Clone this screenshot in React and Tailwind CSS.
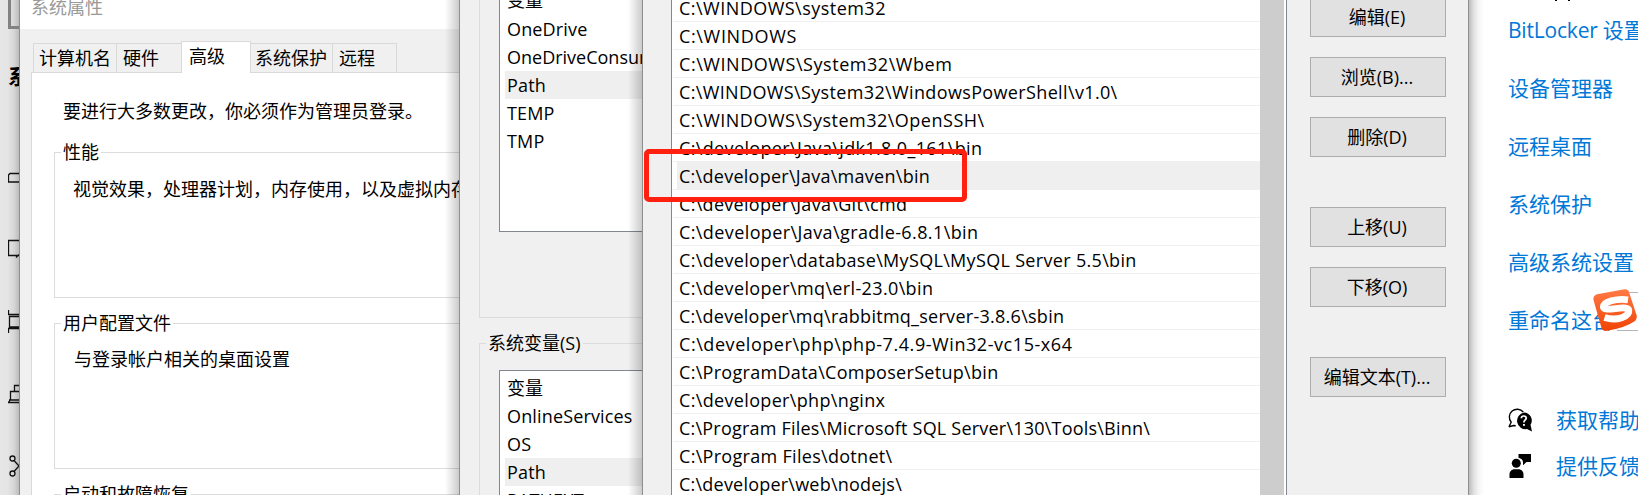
import React from "react";

const paths = [
  ["C:\\WINDOWS\\system32", "tracking-[0.47px]"],
  ["C:\\WINDOWS", "tracking-[0.65px]"],
  ["C:\\WINDOWS\\System32\\Wbem", "tracking-[0.55px]"],
  ["C:\\WINDOWS\\System32\\WindowsPowerShell\\v1.0\\", "tracking-[0.36px]"],
  ["C:\\WINDOWS\\System32\\OpenSSH\\", "tracking-[0.5px]"],
  ["C:\\developer\\Java\\jdk1.8.0_161\\bin", "tracking-[0.36px]"],
  ["C:\\developer\\Java\\maven\\bin", "tracking-[0.27px]"],
  ["C:\\developer\\Java\\Git\\cmd", "tracking-[0.3px]"],
  ["C:\\developer\\Java\\gradle-6.8.1\\bin", "tracking-[0.4px]"],
  ["C:\\developer\\database\\MySQL\\MySQL Server 5.5\\bin", "tracking-[0.32px]"],
  ["C:\\developer\\mq\\erl-23.0\\bin", "tracking-[0.36px]"],
  ["C:\\developer\\mq\\rabbitmq_server-3.8.6\\sbin", "tracking-[0.27px]"],
  ["C:\\developer\\php\\php-7.4.9-Win32-vc15-x64", "tracking-[0.56px]"],
  ["C:\\ProgramData\\ComposerSetup\\bin", "tracking-[0.3px]"],
  ["C:\\developer\\php\\nginx", "tracking-[0.34px]"],
  ["C:\\Program Files\\Microsoft SQL Server\\130\\Tools\\Binn\\", "tracking-[0.21px]"],
  ["C:\\Program Files\\dotnet\\", "tracking-[0.3px]"],
  ["C:\\developer\\web\\nodejs\\", "tracking-[0.22px]"],
];
const SELECTED = 6;

function Sidebar() {
  return (
    <div className="w-[20px] shrink-0 overflow-hidden border-r border-[#8f8f8f] bg-[linear-gradient(to_right,#e6e6e6_0,#e4e4e4_8px,#d6d6d6_14px,#bcbcbc_19px)]">
      <div className="ml-2 h-[29px] w-10 border-b-3 border-l-3 border-[#828282]" />
      <div className="ml-2 mt-[31px] h-8 w-12 whitespace-nowrap text-[21px] font-bold leading-8">系统</div>
      <svg className="ml-2 block h-[403px] w-[11px]" viewBox="8 92 11 403" fill="none" stroke="#111" strokeWidth="1.3">
        <path d="M19 173.500H10L8.500 175V182H19" />
        <path d="M19 240.500H8.500V255.500H19M16 257.500l3-3" />
        <path d="M8.500 310v4.500H19M19 316.500H9.500V327H19M19 328.500H8.500V333" />
        <path d="M19 385.500h-4.500v6M19 391.500h-8.500v8L8.500 402.500H19M9 400H19" />
        <circle cx="12.500" cy="458.500" r="2.500" />
        <circle cx="12.500" cy="473.500" r="2.500" />
        <path d="M14 460.500l5 5.500l-5 5.500" />
      </svg>
    </div>
  );
}

function Group({ title, height, children }) {
  return (
    <fieldset className={"relative ml-[22px] mr-[-20px] shrink-0 border border-[#dcdcdc] " + height}>
      <div className="absolute -top-[15px] left-[6px] h-7 bg-white px-0.5 leading-7">{title}</div>
      {children}
    </fieldset>
  );
}

function SystemProperties() {
  return (
    <div className="relative flex w-[440px] shrink-0 flex-col overflow-hidden border-r border-[#8f8f8f] bg-[#f0f0f0]">
      <div className="h-[29px] shrink-0 bg-white pl-[11px] text-[#999]">
        <div className="-mt-[7px] leading-7">系统属性</div>
      </div>
      <div className="z-10 -mb-px flex h-[44px] shrink-0 items-end pl-[13px] leading-[29px]">
        <div className="h-[30px] w-[84px] border border-[#d9d9d9] pl-[5px]">计算机名</div>
        <div className="-ml-px h-[30px] w-[66px] border border-[#d9d9d9] pl-[6px]">硬件</div>
        <div className="-ml-px h-8 w-[70px] border border-b-0 border-[#d9d9d9] bg-white pl-[7px]">高级</div>
        <div className="-ml-px h-[30px] w-[83px] border border-[#d9d9d9] pl-[4px]">系统保护</div>
        <div className="-ml-px h-[30px] w-[65px] border border-[#d9d9d9] pl-[6px]">远程</div>
      </div>
      <div className="-mr-5 ml-[11px] flex flex-1 flex-col border-l border-t border-[#d9d9d9] bg-white">
        <div className="mb-[27px] ml-[31px] mt-6 h-7 whitespace-nowrap leading-7">要进行大多数更改，你必须作为管理员登录。</div>
        <Group title="性能" height="h-[146px]">
          <div className="ml-[18px] mt-[22px] whitespace-nowrap leading-7">视觉效果，处理器计划，内存使用，以及虚拟内存</div>
        </Group>
        <div className="h-[25px] shrink-0" />
        <Group title="用户配置文件" height="h-[146px]">
          <div className="ml-[19px] mt-[21px] whitespace-nowrap leading-7">与登录帐户相关的桌面设置</div>
        </Group>
        <div className="h-[25px] shrink-0" />
        <Group title="启动和故障恢复" height="h-10" />
      </div>
      <div className="absolute inset-y-0 right-0 z-20 w-3.5 bg-gradient-to-r from-transparent to-black/20" />
    </div>
  );
}

function VarRow({ children, selected, tracking = "tracking-[0.15px]" }) {
  return (
    <div className={"ml-[5px] h-7 whitespace-nowrap pl-0.5 leading-7 " + tracking + (selected ? " bg-[#efefef]" : "")}>{children}</div>
  );
}

function EnvironmentVariables() {
  return (
    <div className="relative flex w-[183px] shrink-0 flex-col overflow-hidden border-r border-[#8f8f8f] bg-[#f0f0f0] pl-[19px]">
      <div className="h-[318px] shrink-0 border-b border-l border-[#dcdcdc] pl-[19px]">
        <div className="h-[232px] overflow-hidden border-b border-l border-[#828790] bg-white">
          <div className="-mt-[14px] ml-[7px] h-[29px] leading-7">变量</div>
          <VarRow>OneDrive</VarRow>
          <VarRow tracking="tracking-[0px]">OneDriveConsumer</VarRow>
          <VarRow selected>Path</VarRow>
          <VarRow>TEMP</VarRow>
          <VarRow>TMP</VarRow>
        </div>
      </div>
      <div className="relative mt-[25px] flex-1 border-l border-t border-[#dcdcdc] pl-[19px] pt-[26px]">
        <div className="absolute -top-[15px] left-[6px] h-7 bg-[#f0f0f0] px-0.5 leading-7">系统变量(S)</div>
        <div className="h-40 border-l border-t border-[#828790] bg-white">
          <div className="ml-[7px] mt-[3px] h-7 leading-7">变量</div>
          <VarRow>OnlineServices</VarRow>
          <VarRow>OS</VarRow>
          <VarRow selected>Path</VarRow>
          <VarRow>PATHEXT</VarRow>
        </div>
      </div>
      <div className="absolute inset-y-0 right-0 w-3.5 bg-gradient-to-r from-transparent to-black/20" />
    </div>
  );
}

function DialogButton({ children, gap }) {
  return (
    <button className={"block h-10 w-[136px] shrink-0 border border-[#adadad] bg-[#e1e1e1] pr-0.5 text-center leading-[38px] " + gap}>{children}</button>
  );
}

function EditPathDialog() {
  return (
    <div className="relative flex w-[826px] shrink-0 border-r border-[#8f8f8f] bg-[#f0f0f0] pl-7">
      <div className="flex w-[616px] shrink-0 overflow-hidden border-x border-[#828790] bg-white">
        <div className="-mt-1.5 w-[588px] shrink-0 pl-px">
          {paths.map(([text, tracking], i) => (
            <div key={text} className="flex h-7 border-b border-[#efefef] pl-1">
              <div className={"flex-1 whitespace-pre pl-0.5 leading-7 " + tracking + (i === SELECTED ? " -mt-px h-[29px] bg-[#efefef] pt-px" : " h-7")}>{text}</div>
            </div>
          ))}
        </div>
        <div className="w-6 bg-[#cdcdcd]" />
      </div>
      <div className="ml-[23px] flex flex-col">
        <DialogButton gap="-mt-[3px]">编辑(E)</DialogButton>
        <DialogButton gap="mt-5">浏览(B)...</DialogButton>
        <DialogButton gap="mt-5">删除(D)</DialogButton>
        <DialogButton gap="mt-[50px]">上移(U)</DialogButton>
        <DialogButton gap="mt-5">下移(O)</DialogButton>
        <DialogButton gap="mt-[50px]">编辑文本(T)...</DialogButton>
      </div>
      <div className="absolute left-px top-[149px] h-[53px] w-[323px] rounded-[5px] border-5 border-[#ff2010]" />
    </div>
  );
}

function Settings() {
  return (
    <div className="relative w-[169px] shrink-0 overflow-hidden bg-[linear-gradient(to_right,#bdbdbd_0,#e2e2e2_5px,#f6f6f6_10px,#fff_15px)] pl-[39px] text-[21px] text-[#0078d7]">
      <div className="absolute left-[86px] top-0 flex gap-[11px]">
        <div className="h-px w-0.5 bg-black" />
        <div className="h-px w-0.5 bg-black" />
      </div>
      <div className="mt-px flex flex-col whitespace-nowrap leading-[58px]">
        <div className="h-[58px] tracking-[-0.2px]">BitLocker 设置</div>
        <div className="h-[58px]">设备管理器</div>
        <div className="h-[58px]">远程桌面</div>
        <div className="h-[58px]">系统保护</div>
        <div className="h-[58px]">高级系统设置</div>
        <div className="h-[58px]">重命名这台电脑</div>
      </div>
      <div className="mt-[48px] flex h-[46px] items-center whitespace-nowrap">
        <svg className="mr-6 h-6 w-6 shrink-0" viewBox="0 0 24 24">
          <path d="M.9 18.800l2.300-4.600A7.600 7.600 0 1 1 15.300 4M.9 18.800l4.800-1.300l2 .300" fill="none" stroke="#000" strokeWidth="1.400" />
          <path d="M16 4.500a8 8 0 0 1 6.500 12.300L24 23.600l-5-2.500A8.200 8.200 0 1 1 16 4.500z" fill="#000" />
          <path d="M13.300 10.300c.2-3.200 5.200-2.900 4.900.1c-.1 1.500-2.300 1.800-2.300 4" fill="none" stroke="#fff" strokeWidth="1.700" />
          <rect x="15" y="16" width="1.900" height="1.800" fill="#fff" />
        </svg>
        <span className="pt-0.5">获取帮助</span>
      </div>
      <div className="flex h-[46px] items-center whitespace-nowrap">
        <svg className="mr-6 h-6 w-6 shrink-0" viewBox="0 0 24 24">
          <circle cx="8.300" cy="9.300" r="4.500" />
          <path d="M1.500 24v-3.500c0-3 2.300-5.200 5-5.200h4c2.800 0 5 2.200 5 5.200V24zM10.500 0H23v8h-4.500l-3.500 3.300V8c-.2-2-1.800-3.700-4.500-4.300z" />
        </svg>
        <span className="pt-0.5">提供反馈</span>
      </div>
      <div className="absolute left-[148px] top-[292px] h-[39px] w-10 border-y border-[#b4b4bc] bg-white" />
      <svg className="absolute left-[124px] top-[289px] h-[43px] w-[45px]" viewBox="0 0 45 43">
        <defs>
          <linearGradient id="sogou" x1="0" y1="0" x2="0" y2="1">
            <stop offset="0" stopColor="#ff7a45" />
            <stop offset="1" stopColor="#f04406" />
          </linearGradient>
        </defs>
        <path d="M4 5.200L31.500.3Q35 0 36 3L43.500 26Q44.500 29.500 42 32Q32 39 13 42Q9.500 42 8.500 39L.5 11Q-.2 6.500 4 5.200z" fill="url(#sogou)" />
        <path d="M35 10.800C24 9.300 10 12.500 10.300 18C10.800 23.500 34 15.500 35.800 21C36.800 27.500 24 32.500 11.500 28.500" fill="none" stroke="#fff" strokeWidth="6.800" />
      </svg>
    </div>
  );
}

export default function App() {
  return (
    <div className="flex h-[495px] w-[1638px] overflow-hidden bg-white font-['Open_Sans','Noto_Sans_CJK_SC',sans-serif] text-[18px] text-black">
      <Sidebar />
      <SystemProperties />
      <EnvironmentVariables />
      <EditPathDialog />
      <Settings />
    </div>
  );
}
